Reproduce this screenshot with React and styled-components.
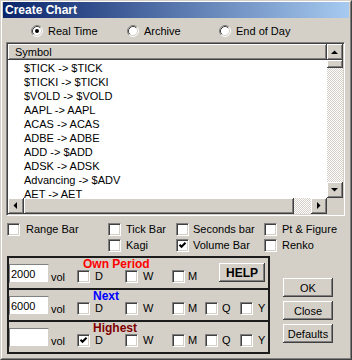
import React from "react";
import styled, { createGlobalStyle } from "styled-components";

const Global = createGlobalStyle`
  html, body { margin: 0; padding: 0; background: #d4d0c8; }
  body { font-family: "Liberation Sans", Arial, sans-serif; font-size: 11px; color: #000; }
`;

const raised = `
  background: #d4d0c8;
  box-shadow: inset -1px -1px #404040, inset 1px 1px #fff, inset -2px -2px #808080, inset 2px 2px #d4d0c8;
`;

const Win = styled.div`
  width: 352px;
  height: 360px;
  box-sizing: border-box;
  border: 1px solid;
  border-color: #d4d0c8 #404040 #404040 #d4d0c8;
  background: #d4d0c8;
  overflow: hidden;
`;

const Frame = styled.div`
  height: 100%;
  box-sizing: border-box;
  border: 1px solid;
  border-color: #fff #808080 #808080 #fff;
  padding: 0 1px 1px 1px;
`;

const TitleBar = styled.div`
  height: 16px;
  display: flex;
  align-items: center;
  padding-left: 2px;
  background: linear-gradient(to right, #0a246a, #a6caf0);
  color: #fff;
  font-weight: bold;
  font-size: 12px;
`;

const RadioRow = styled.div`
  margin-top: 7px;
  padding-left: 28px;
  height: 12px;
  display: grid;
  grid-template-columns: 96px 92px auto;
  align-items: center;
`;

const RadioItem = styled.label`
  display: flex;
  align-items: center;
  gap: 5px;
  line-height: 12px;
`;

const Radio = ({ checked }) => (
  <svg width="12" height="12" viewBox="0 0 12 12">
    <circle cx="6" cy="6" r="5" fill="#fff" />
    <path d="M2.11 9.89 A5.5 5.5 0 0 1 9.89 2.11" fill="none" stroke="#808080" />
    <path d="M9.89 2.11 A5.5 5.5 0 0 1 2.11 9.89" fill="none" stroke="#fff" />
    <path d="M2.82 9.18 A4.5 4.5 0 0 1 9.18 2.82" fill="none" stroke="#404040" />
    <path d="M9.18 2.82 A4.5 4.5 0 0 1 2.82 9.18" fill="none" stroke="#d4d0c8" />
    {checked && <circle cx="6" cy="6" r="2" fill="#000" />}
  </svg>
);

const ListBox = styled.div`
  margin: 5px 0 0 3px;
  width: 339px;
  height: 174px;
  box-sizing: border-box;
  border: 1px solid;
  border-color: #808080 #fff #fff #808080;
  padding: 1px;
  box-shadow: inset 1px 1px #404040, inset -1px -1px #d4d0c8;
  display: grid;
  grid-template-columns: 1fr 16px;
  grid-template-rows: 16px 1fr 16px;
`;

const Header = styled.div`
  ${raised}
  grid-row: 1;
  grid-column: 1;
  padding-left: 7px;
  line-height: 16px;
`;

const Items = styled.div`
  grid-row: 2;
  grid-column: 1;
  background: #fff;
  padding: 1px 0 0 16px;
  overflow: hidden;
`;

const Item = styled.div`
  line-height: 14px;
  height: 14px;
  white-space: nowrap;
`;

const VScroll = styled.div`
  grid-row: 1 / 3;
  grid-column: 2;
  display: flex;
  flex-direction: column;
`;

const HScroll = styled.div`
  grid-row: 3;
  grid-column: 1;
  display: flex;
`;

const Corner = styled.div`
  grid-row: 3;
  grid-column: 2;
  background: #d4d0c8;
`;

const ArrowBtn = styled.div`
  ${raised}
  width: 16px;
  height: 16px;
  flex: none;
  display: flex;
  align-items: center;
  justify-content: center;
`;

const Thumb = styled.div`
  ${raised}
  flex: none;
  width: ${(p) => p.$w || 16}px;
  height: ${(p) => p.$h || 16}px;
`;

const Track = styled.div`
  flex: 1;
  background-color: #fff;
  background-image: repeating-conic-gradient(#d4d0c8 0% 25%, #fff 0% 50%);
  background-size: 2px 2px;
`;

const Arrow = ({ dir }) => {
  const pts = {
    up: "4,10 11,10 7.5,6.5",
    down: "4,6 11,6 7.5,9.5",
    left: "9,4 9,11 5.5,7.5",
    right: "6,4 6,11 9.5,7.5",
  }[dir];
  return (
    <svg width="16" height="16" viewBox="0 0 16 16">
      <polygon points={pts} fill="#000" />
    </svg>
  );
};

const ChartTypes = styled.div`
  margin: 7px 0 0 4px;
  display: grid;
  grid-template-columns: 101px 68px 88px auto;
  row-gap: 3px;
`;

const CheckItem = styled.label`
  display: flex;
  align-items: center;
  gap: ${(p) => p.$gap ?? 5}px;
  line-height: 13px;
  width: ${(p) => (p.$w ? p.$w + "px" : "auto")};
  flex: none;
`;

const BoxSquare = styled.span`
  width: 13px;
  height: 13px;
  flex: none;
  box-sizing: border-box;
  border: 1px solid;
  border-color: #808080 #fff #fff #808080;
  box-shadow: inset 1px 1px #404040, inset -1px -1px #d4d0c8;
  background: #fff;
  display: flex;
  align-items: center;
  justify-content: center;
`;

const CheckBox = ({ checked }) => (
  <BoxSquare>
    {checked && (
      <svg width="9" height="9" viewBox="0 0 9 9">
        <polyline points="1.5,3.8 3.5,5.8 7.5,1.8" fill="none" stroke="#000" strokeWidth="2" />
      </svg>
    )}
  </BoxSquare>
);

const Check = ({ label, checked, w, gap }) => (
  <CheckItem $w={w} $gap={gap}>
    <CheckBox checked={checked} />
    <span>{label}</span>
  </CheckItem>
);

const Bottom = styled.div`
  margin: 4px 0 0 4px;
  display: flex;
  align-items: flex-start;
`;

const GroupStack = styled.div`
  width: 263px;
  box-sizing: border-box;
  border: 2px solid #1c1c1c;
`;

const PeriodBox = styled.div`
  height: 30px;
  display: flex;
  align-items: flex-start;
  & + & {
    border-top: 2px solid #1c1c1c;
  }
`;

const InputGroup = styled.div`
  margin-top: 6px;
  width: 68px;
  flex: none;
  display: flex;
  align-items: flex-end;
`;

const Field = styled.input`
  width: 40px;
  height: 19px;
  box-sizing: border-box;
  margin: 0;
  padding: 0 0 0 1px;
  border: 1px solid;
  border-color: #808080 #d4d0c8 #d4d0c8 #808080;
  background: #fff;
  font-family: "Liberation Sans", Arial, sans-serif;
  font-size: 11px;
  color: #000;
  outline: none;
`;

const Vol = styled.span`
  margin-left: 2px;
  line-height: 11px;
`;

const RightCol = styled.div`
  display: flex;
  flex-direction: column;
`;

const PeriodTitle = styled.div`
  font-weight: bold;
  font-size: 12px;
  line-height: 12px;
  height: 12px;
  color: ${(p) => p.$color};
  margin-left: ${(p) => p.$indent}px;
`;

const CheckRow = styled.div`
  display: flex;
`;

const HelpButton = styled.div`
  ${raised}
  margin: 5px 0 0 14px;
  width: 46px;
  height: 19px;
  display: flex;
  align-items: center;
  justify-content: center;
  font-weight: bold;
  font-size: 12px;
`;

const ButtonCol = styled.div`
  margin: 22px 0 0 13px;
  display: flex;
  flex-direction: column;
  gap: 4px;
`;

const Button = styled.div`
  ${raised}
  width: 50px;
  height: 19px;
  display: flex;
  align-items: center;
  justify-content: center;
`;

const symbols = [
  "$TICK -> $TICK",
  "$TICKI -> $TICKI",
  "$VOLD -> $VOLD",
  "AAPL -> AAPL",
  "ACAS -> ACAS",
  "ADBE -> ADBE",
  "ADD -> $ADD",
  "ADSK -> ADSK",
  "Advancing -> $ADV",
  "AET -> AET",
];

const periods = [
  { value: "2000", title: "Own Period", color: "#ff0000", indent: 6, qy: false, help: true, d: false },
  { value: "6000", title: "Next", color: "#0000ff", indent: 16, qy: true, help: false, d: false },
  { value: "", title: "Highest", color: "#800000", indent: 16, qy: true, help: false, d: true },
];

export default function App() {
  return (
    <>
      <Global />
      <Win>
        <Frame>
          <TitleBar>Create Chart</TitleBar>
          <RadioRow>
            <RadioItem><Radio checked />Real Time</RadioItem>
            <RadioItem><Radio />Archive</RadioItem>
            <RadioItem><Radio />End of Day</RadioItem>
          </RadioRow>
          <ListBox>
            <Header>Symbol</Header>
            <Items>
              {symbols.map((s) => (
                <Item key={s}>{s}</Item>
              ))}
            </Items>
            <VScroll>
              <ArrowBtn><Arrow dir="up" /></ArrowBtn>
              <Thumb $h={8} />
              <Track />
              <ArrowBtn><Arrow dir="down" /></ArrowBtn>
            </VScroll>
            <HScroll>
              <ArrowBtn><Arrow dir="left" /></ArrowBtn>
              <Thumb $w={270} />
              <Track />
              <ArrowBtn><Arrow dir="right" /></ArrowBtn>
            </HScroll>
            <Corner />
          </ListBox>
          <ChartTypes>
            <Check label="Range Bar" gap={6} />
            <Check label="Tick Bar" />
            <Check label="Seconds bar" gap={4} />
            <Check label="Pt & Figure" gap={5} />
            <span />
            <Check label="Kagi" />
            <Check label="Volume Bar" checked gap={4} />
            <Check label="Renko" gap={5} />
          </ChartTypes>
          <Bottom>
            <GroupStack>
              {periods.map((p) => (
                <PeriodBox key={p.title}>
                  <InputGroup>
                    <Field defaultValue={p.value} readOnly />
                    <Vol>vol</Vol>
                  </InputGroup>
                  <RightCol>
                    <PeriodTitle $color={p.color} $indent={p.indent}>{p.title}</PeriodTitle>
                    <CheckRow>
                      <Check label="D" w={48} checked={p.d} />
                      <Check label="W" w={47} />
                      <Check label="M" w={33} gap={3} />
                      {p.qy && <Check label="Q" w={35} gap={4} />}
                      {p.qy && <Check label="Y" gap={5} />}
                    </CheckRow>
                  </RightCol>
                  {p.help && <HelpButton>HELP</HelpButton>}
                </PeriodBox>
              ))}
            </GroupStack>
            <ButtonCol>
              <Button>OK</Button>
              <Button>Close</Button>
              <Button>Defaults</Button>
            </ButtonCol>
          </Bottom>
        </Frame>
      </Win>
    </>
  );
}
